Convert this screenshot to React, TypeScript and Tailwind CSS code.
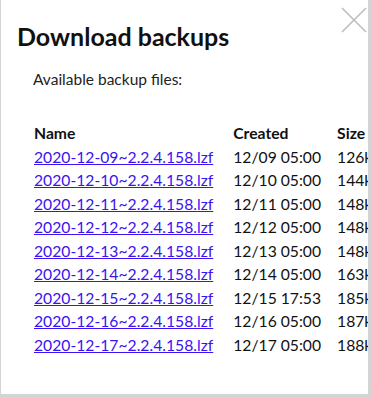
import React from "react";

const rows = [
  ["2020-12-09~2.2.4.158.lzf", "12/09 05:00", "126kB"],
  ["2020-12-10~2.2.4.158.lzf", "12/10 05:00", "144kB"],
  ["2020-12-11~2.2.4.158.lzf", "12/11 05:00", "148kB"],
  ["2020-12-12~2.2.4.158.lzf", "12/12 05:00", "148kB"],
  ["2020-12-13~2.2.4.158.lzf", "12/13 05:00", "148kB"],
  ["2020-12-14~2.2.4.158.lzf", "12/14 05:00", "163kB"],
  ["2020-12-15~2.2.4.158.lzf", "12/15 17:53", "185kB"],
  ["2020-12-16~2.2.4.158.lzf", "12/16 05:00", "187kB"],
  ["2020-12-17~2.2.4.158.lzf", "12/17 05:00", "188kB"],
];

export default function App() {
  return (
    <div
      className="w-[371px] h-[397px] overflow-hidden bg-[#d4d4d4]"
      style={{ fontFamily: "Lato, 'Noto Sans', sans-serif" }}
    >
      <div className="relative ml-[1px] w-[367px] h-[394px] bg-white overflow-hidden">
        <svg
          className="absolute left-[340px] top-[7px]"
          width="26"
          height="26"
          viewBox="0 0 26 26"
        >
          <path d="M1 1 L25 25 M25 1 L1 25" stroke="#bdbdbd" strokeWidth="1.6" fill="none" />
        </svg>
        <h1 className="pl-[16px] pt-[21px] text-[25px] leading-[30px] font-bold text-[#111]">
          Download backups
        </h1>
        <p className="pl-[32px] pt-[18px] text-[15.5px] leading-[20px] text-[#222]">
          Available backup files:
        </p>
        <table className="ml-[33px] mt-[33px] text-[15.7px] text-[#111] border-collapse whitespace-nowrap">
          <thead>
            <tr className="h-[23.4px]">
              <th className="text-left font-bold pr-[20px] pl-0 p-0">Name</th>
              <th className="text-left font-bold pr-[16px] p-0">Created</th>
              <th className="text-left font-bold p-0">Size</th>
            </tr>
          </thead>
          <tbody>
            {rows.map((r) => (
              <tr key={r[0]} className="h-[23.4px]">
                <td className="p-0 pr-[20px]">
                  <a href="#" className="underline text-[#3b12f0]">
                    {r[0]}
                  </a>
                </td>
                <td className="p-0 pr-[16px]">{r[1]}</td>
                <td className="p-0">{r[2]}</td>
              </tr>
            ))}
          </tbody>
        </table>
      </div>
    </div>
  );
}
